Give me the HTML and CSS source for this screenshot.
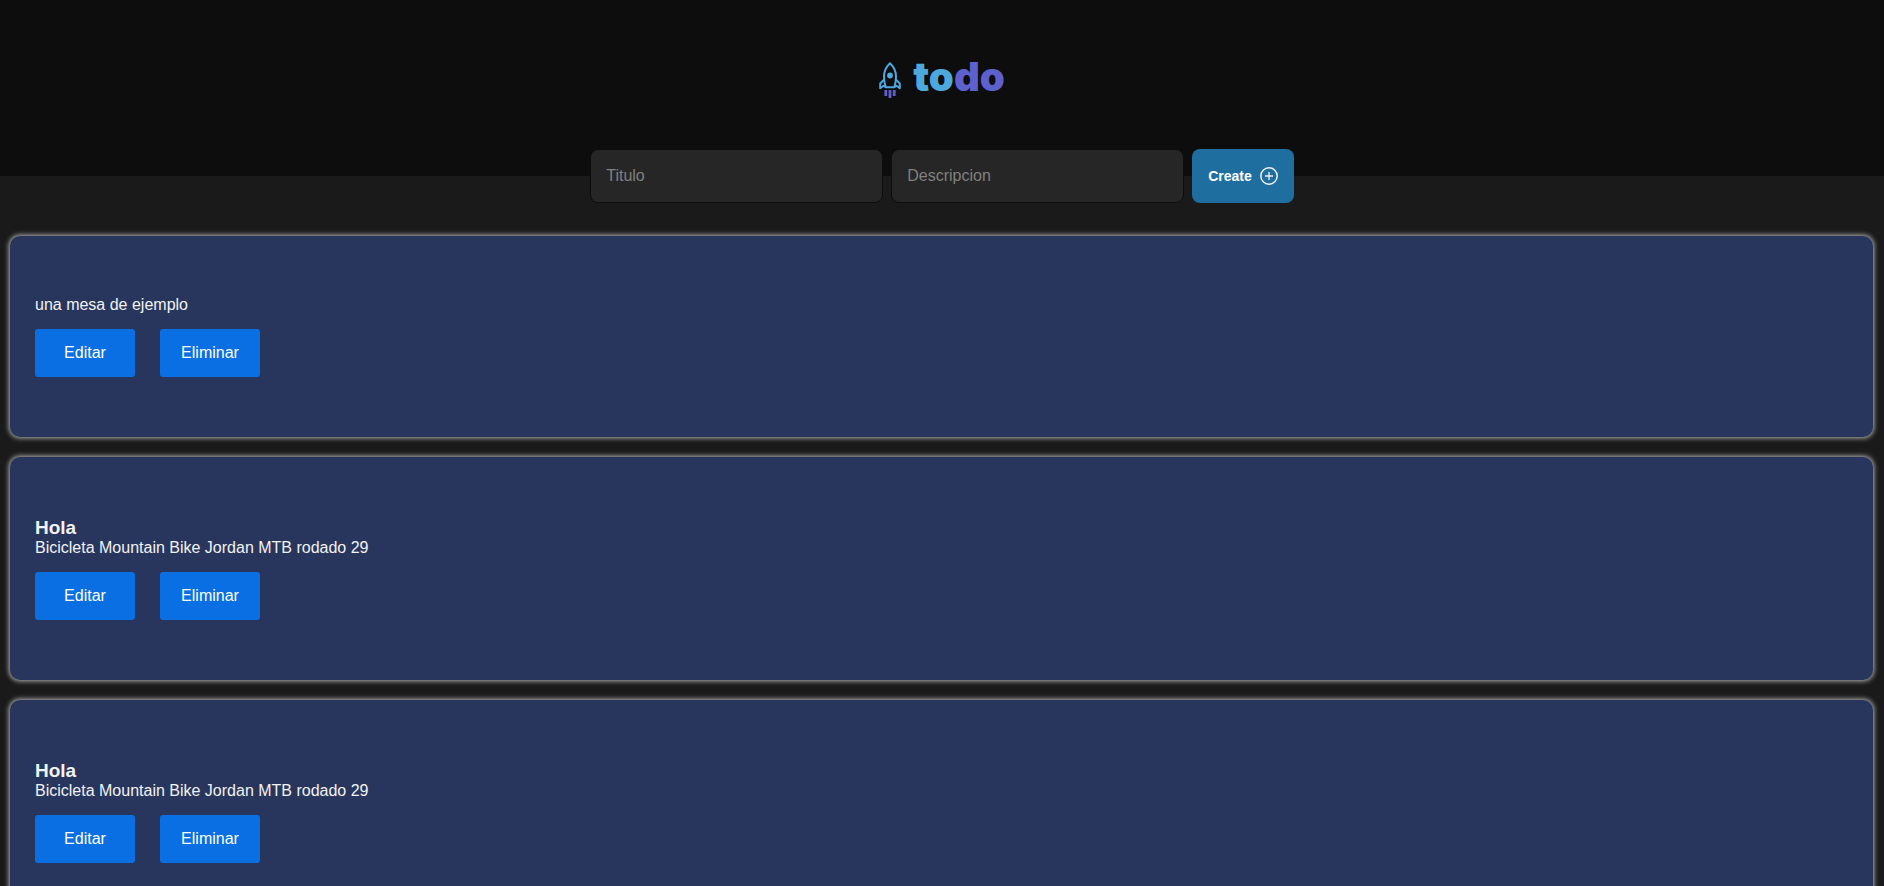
FILE: index.html
```html
<!DOCTYPE html>
<html lang="es">
<head>
<meta charset="utf-8">
<meta name="viewport" content="width=device-width, initial-scale=1">
<title>todo</title>
<link rel="stylesheet" href="styles.css">
</head>
<body>
<header class="header">
  <h1 class="logo">
    <svg class="logo-rocket" viewBox="0 0 22 36" fill="none" aria-hidden="true">
      <path d="M11 1.2C7.400 4.600 5 9.400 5 14.500c0 4 .6 7.500 1.700 10.700h8.600c1.100-3.200 1.700-6.700 1.700-10.700C17 9.400 14.600 4.600 11 1.200Z" stroke="#4EA8DE" stroke-width="2" stroke-linejoin="round"/>
      <path d="M5.200 17.500 1.200 21.500V26.300L4.600 23.700 6.700 25.200M16.800 17.500l4 4v4.800l-3.400-2.600-2.100 1.500" stroke="#4EA8DE" stroke-width="2" stroke-linejoin="round"/>
      <circle cx="11" cy="13.500" r="2.900" fill="#4EA8DE"/>
      <path d="M6.800 28v6M11 28v8M15.200 28v6" stroke="#5E60CE" stroke-width="2.800"/>
    </svg>
    <span class="logo-text">to<span class="logo-accent">do</span></span>
  </h1>
</header>
<main>
  <form class="task-form">
    <input class="task-input" type="text" placeholder="Titulo" aria-label="Titulo">
    <input class="task-input" type="text" placeholder="Descripcion" aria-label="Descripcion">
    <button class="create-button" type="button">Create
      <svg class="plus-icon" viewBox="0 0 18 18" fill="none" stroke="#f2f2f2" aria-hidden="true">
        <circle cx="9" cy="9" r="8.200" stroke-width="1.500"/>
        <path d="M9 5v8M5 9h8" stroke-width="1.300"/>
      </svg>
    </button>
  </form>
  <section class="tasks">
    <article class="card">
      <p class="card-text">una mesa de ejemplo</p>
      <div class="card-actions">
        <button class="card-button" type="button">Editar</button>
        <button class="card-button" type="button">Eliminar</button>
      </div>
    </article>
    <article class="card">
      <h3 class="card-title">Hola</h3>
      <p class="card-text">Bicicleta Mountain Bike Jordan MTB rodado 29</p>
      <div class="card-actions">
        <button class="card-button" type="button">Editar</button>
        <button class="card-button" type="button">Eliminar</button>
      </div>
    </article>
    <article class="card">
      <h3 class="card-title">Hola</h3>
      <p class="card-text">Bicicleta Mountain Bike Jordan MTB rodado 29</p>
      <div class="card-actions">
        <button class="card-button" type="button">Editar</button>
        <button class="card-button" type="button">Eliminar</button>
      </div>
    </article>
  </section>
</main>
</body>
</html>
```
FILE: styles.css
```css
* { box-sizing: border-box; margin: 0; padding: 0; }
html { scrollbar-width: none; }
body {
  background: #1a1a1a;
  color: #f2f2f2;
  font: 16px/18px "Liberation Sans", Arial, sans-serif;
}
.header {
  background: #0d0d0d;
  padding: 56px 0 72px;
}
.logo {
  display: flex;
  justify-content: center;
  align-items: center;
  gap: 12px;
  height: 48px;
}
.logo-rocket { width: 22px; height: 36px; }
.logo-text {
  padding-bottom: 6px;
  color: #4ea8de;
  font: 900 40px/42px Inter, sans-serif;
}
.logo-accent { color: #5e60ce; }
.task-form {
  display: flex;
  justify-content: center;
  align-items: stretch;
  gap: 8px;
  margin-top: -27px;
}
.task-input {
  width: 293px;
  height: 54px;
  padding: 0 15px;
  background: #262626;
  border: 1px solid #0d0d0d;
  border-radius: 8px;
  color: #f2f2f2;
  font: inherit;
}
.task-input::placeholder { color: #808080; }
.create-button {
  display: flex;
  align-items: center;
  gap: 8px;
  padding: 0 16px;
  background: #1e6f9f;
  border: 0;
  border-radius: 8px;
  color: #ffffff;
  font: bold 14px/18px "Liberation Sans", Arial, sans-serif;
}
.plus-icon { width: 18px; height: 18px; }
.tasks {
  display: flex;
  flex-direction: column;
  gap: 20px;
  padding: 33px 11px 20px 10px;
}
.card {
  padding: 60px 25px;
  background: #28365e;
  border-radius: 10px;
  box-shadow: 0 0 5px 1px #b8b8b8;
}
.card-title {
  padding-bottom: 1px;
  font-size: 19px;
  line-height: 21px;
}
.card-actions { display: flex; gap: 25px; margin-top: 15px; }
.card-button {
  width: 100px;
  height: 48px;
  background: #0a6fe3;
  border: 0;
  border-radius: 3px;
  color: #ffffff;
  font: inherit;
}
```
